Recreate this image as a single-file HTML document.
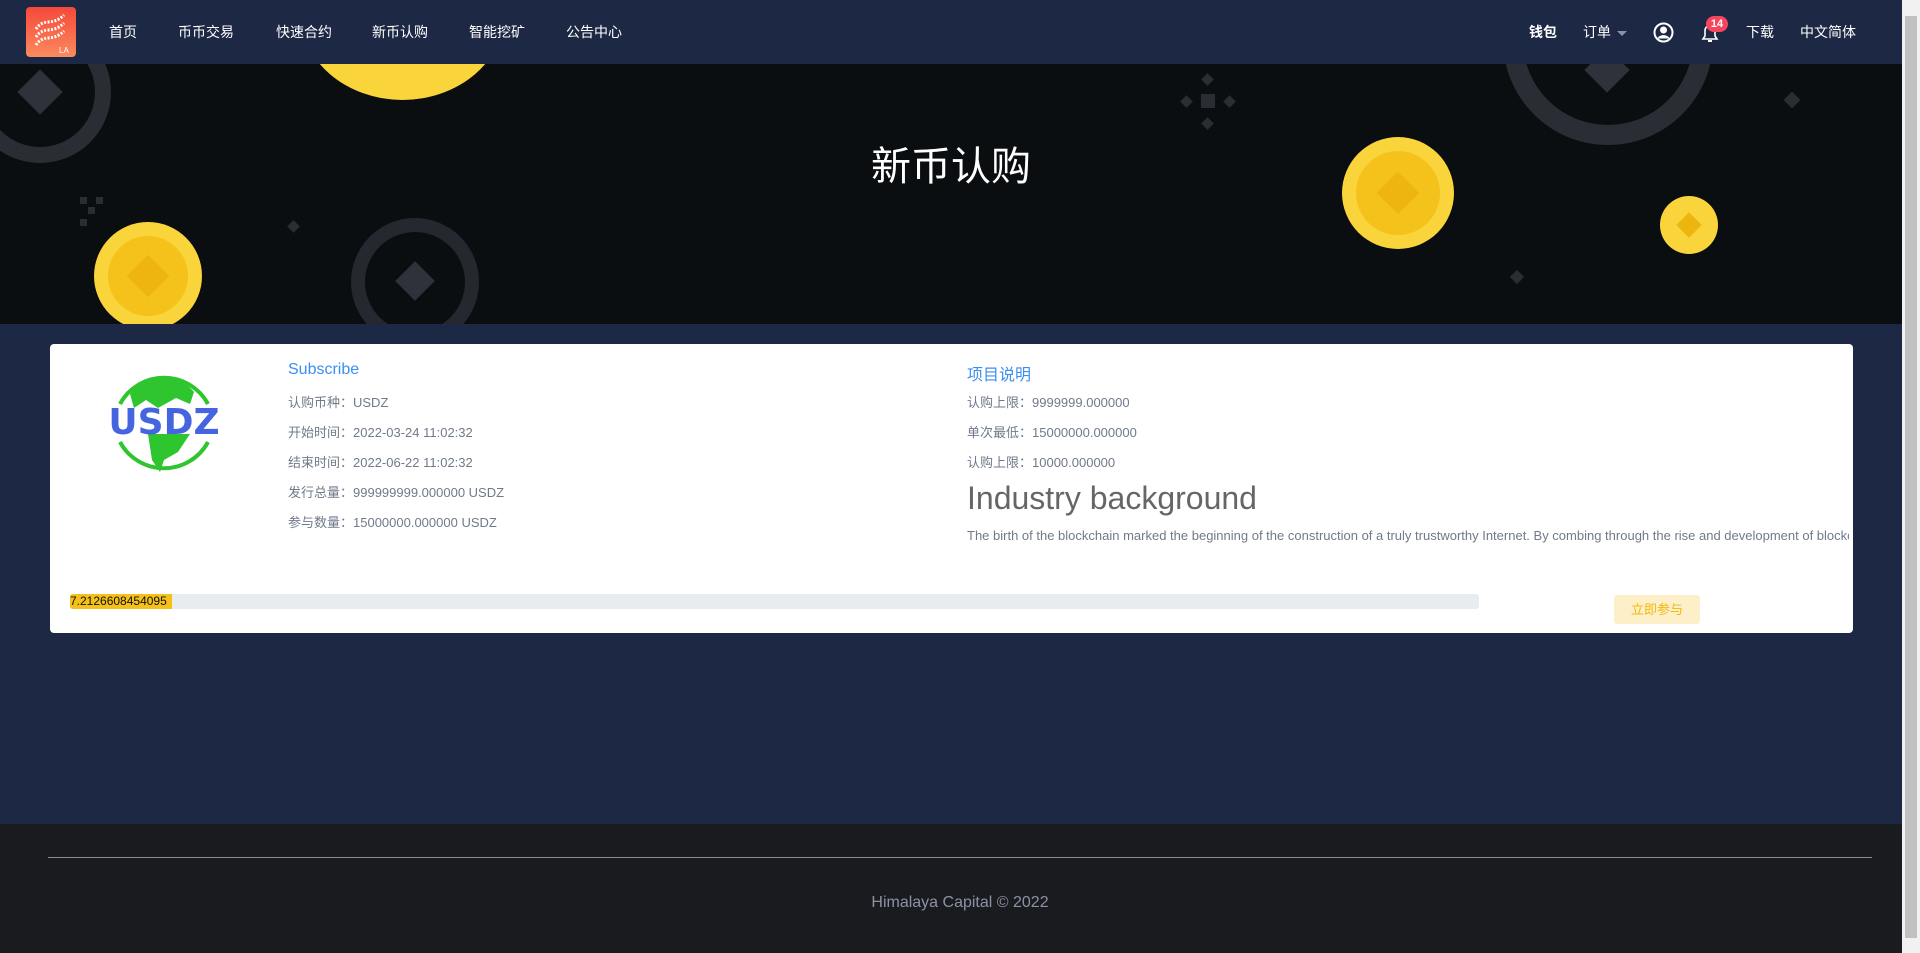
<!DOCTYPE html>
<html><head><meta charset="utf-8"><style>
*{margin:0;padding:0;box-sizing:border-box}
body{width:1920px;height:953px;overflow:hidden;background:#1c2844;font-family:"Liberation Sans","Noto Sans CJK SC",sans-serif;position:relative}
.nav{position:absolute;left:0;top:0;width:1902px;height:64px;background:#1c2844}
.nav a{position:absolute;top:22px;color:#fff;font-size:14px;text-decoration:none;white-space:nowrap}
.logo{position:absolute;left:26px;top:7px;width:50px;height:50px;border-radius:4px;background:linear-gradient(#f5493a,#fb8a5e)}
.banner{position:absolute;left:0;top:64px;width:1902px;height:260px;background:#0b0e11;overflow:hidden}
.c{position:absolute;border-radius:50%}
.title{position:absolute;left:0;width:1902px;top:70px;text-align:center;color:#fff;font-size:40px}
.card{position:absolute;left:50px;top:344px;width:1803px;height:289px;background:#fff;border-radius:4px;overflow:hidden}
.t{position:absolute;font-size:13px;color:#707a8a;white-space:nowrap}
.h{position:absolute;font-size:16px;color:#3b8ff0}
.footer{position:absolute;left:0;top:824px;width:1902px;height:129px;background:#1a1b1f}
.sb{position:absolute;left:1902px;top:0;width:18px;height:953px;background:#f1f1f1}
.d{position:absolute;background:#2a2d34;transform:rotate(45deg)}
</style></head><body>
<div class="nav">
<div class="logo"><svg width="50" height="50" viewBox="0 0 50 50"><g fill="none" stroke="#fff" stroke-width="3" stroke-dasharray="2 1.5"><path d="M10 22 C18 10 26 20 38 8"/><path d="M10 30 C18 18 26 28 38 16"/><path d="M10 38 C18 26 26 36 38 24"/></g><text x="33" y="46" font-size="8" fill="#fff" font-family="Liberation Sans">LA</text></svg></div>
<a style="left:109px">首页</a><a style="left:178px">币币交易</a><a style="left:276px">快速合约</a><a style="left:372px">新币认购</a><a style="left:469px">智能挖矿</a><a style="left:566px">公告中心</a>
<a style="left:1529px;font-weight:bold">钱包</a><a style="left:1583px">订单</a>
<div style="position:absolute;left:1617px;top:31px;border:5px solid transparent;border-top:5px solid #8a93a5"></div>
<svg style="position:absolute;left:1653px;top:22px" width="21" height="21" viewBox="0 0 21 21"><circle cx="10.5" cy="10.5" r="9" fill="none" stroke="#fff" stroke-width="2"/><circle cx="10.5" cy="8" r="3.5" fill="#fff"/><path d="M4.5 16.5 C6 12 15 12 16.5 16.5" fill="#fff"/></svg>
<svg style="position:absolute;left:1700px;top:22px" width="20" height="22" viewBox="0 0 20 22"><path d="M3 17 L5 14 V9 C5 5 7.5 4 10 4 C12.5 4 15 5 15 9 V14 L17 17 Z" fill="none" stroke="#fff" stroke-width="1.6"/><rect x="8" y="18" width="4" height="2" fill="#fff"/></svg>
<div style="position:absolute;left:1706px;top:16px;width:22px;height:16px;border-radius:8px;background:#f6465d;color:#fff;font-size:11px;font-weight:bold;text-align:center;line-height:16px">14</div>
<a style="left:1746px">下载</a><a style="left:1800px">中文简体</a>
</div>
<div class="banner">
<div class="c" style="left:300px;top:-140px;width:205px;height:176px;background:#f9d53b;border-radius:0 0 50% 50%"></div>
<div class="c" style="left:-31px;top:-43px;width:142px;height:142px;border:16px solid #2a2d34"></div>
<div style="position:absolute;left:24px;top:12px;width:32px;height:32px;background:#2f323a;transform:rotate(45deg)"></div>
<div class="c" style="left:351px;top:154px;width:128px;height:128px;border:14px solid #25282f"></div>
<div style="position:absolute;left:401px;top:203px;width:28px;height:28px;background:#2f323a;transform:rotate(45deg)"></div>
<div class="c" style="left:1503px;top:-129px;width:210px;height:210px;border:20px solid #2a2d34"></div>
<div style="position:absolute;left:1591px;top:-10px;width:32px;height:32px;background:#2f323a;transform:rotate(45deg)"></div>
<div class="c" style="left:1342px;top:73px;width:112px;height:112px;background:#f9d53b"></div>
<div class="c" style="left:1356px;top:87px;width:84px;height:84px;background:#f4c21a"></div>
<div style="position:absolute;left:1383px;top:114px;width:30px;height:30px;background:#eeb510;transform:rotate(45deg)"></div>
<div class="c" style="left:1660px;top:132px;width:58px;height:58px;background:#f9d53b"></div>
<div style="position:absolute;left:1680px;top:152px;width:18px;height:18px;background:#eeb510;transform:rotate(45deg)"></div>
<div class="c" style="left:94px;top:158px;width:108px;height:108px;background:#f9d53b"></div>
<div class="c" style="left:108px;top:172px;width:80px;height:80px;background:#f4c21a"></div>
<div style="position:absolute;left:133px;top:197px;width:30px;height:30px;background:#eeb510;transform:rotate(45deg)"></div>
<div style="position:absolute;left:1201px;top:30px;width:14px;height:14px;background:#2a2d34"></div>
<div class="d" style="left:1182px;top:33px;width:9px;height:9px"></div>
<div class="d" style="left:1225px;top:33px;width:9px;height:9px"></div>
<div class="d" style="left:1203px;top:11px;width:9px;height:9px"></div>
<div class="d" style="left:1203px;top:55px;width:9px;height:9px"></div>
<div style="position:absolute;left:80px;top:133px;width:7px;height:7px;background:#2a2d34"></div>
<div style="position:absolute;left:96px;top:133px;width:7px;height:7px;background:#2a2d34"></div>
<div style="position:absolute;left:88px;top:143px;width:7px;height:7px;background:#2a2d34"></div>
<div style="position:absolute;left:80px;top:155px;width:7px;height:7px;background:#2a2d34"></div>
<div class="d" style="left:1786px;top:30px;width:12px;height:12px"></div>
<div class="d" style="left:1512px;top:208px;width:10px;height:10px"></div>
<div class="d" style="left:289px;top:158px;width:9px;height:9px"></div>
<div class="title">新币认购</div>
</div>
<div class="card">
<svg style="position:absolute;left:56px;top:20px" width="116" height="116" viewBox="0 0 116 116"><path d="M14 40 A50 50 0 0 1 102 40" fill="none" stroke="#2ec52e" stroke-width="4"/><path d="M24 30 C40 10 72 8 88 28 L84 40 L70 34 L52 44 L40 36 L28 44 Z" fill="#2ec52e"/><path d="M14 78 A50 50 0 0 0 102 78" fill="none" stroke="#2ec52e" stroke-width="4"/><path d="M42 70 L84 70 L72 88 L58 96 L54 108 L46 96 Z" fill="#2ec52e"/><text x="58" y="70" text-anchor="middle" font-size="36" font-weight="bold" fill="#4565e0" font-family="DejaVu Sans">USDZ</text></svg>
<div class="h" style="left:238px;top:17px">Subscribe</div>
<div class="t" style="left:238px;top:48px">认购币种：USDZ</div>
<div class="t" style="left:238px;top:78px">开始时间：2022-03-24 11:02:32</div>
<div class="t" style="left:238px;top:108px">结束时间：2022-06-22 11:02:32</div>
<div class="t" style="left:238px;top:138px">发行总量：999999999.000000 USDZ</div>
<div class="t" style="left:238px;top:168px">参与数量：15000000.000000 USDZ</div>
<div class="h" style="left:917px;top:17px">项目说明</div>
<div class="t" style="left:917px;top:48px">认购上限：9999999.000000</div>
<div class="t" style="left:917px;top:78px">单次最低：15000000.000000</div>
<div class="t" style="left:917px;top:108px">认购上限：10000.000000</div>
<div class="t" style="left:917px;top:136px;font-size:32px;color:#666">Industry background</div>
<div class="t" style="left:917px;top:184px;font-size:13px;width:882px;overflow:hidden">The birth of the blockchain marked the beginning of the construction of a truly trustworthy Internet. By combing through the rise and development of blockchain technology and its applications</div>
<div style="position:absolute;left:20px;top:250px;width:1409px;height:15px;background:#e9ecef;border-radius:3px"></div>
<div style="position:absolute;left:20px;top:250px;width:102px;height:15px;background:#f5c118;border-radius:3px 0 0 3px;font-size:12px;line-height:15px;color:#111">7.2126608454095</div>
<div style="position:absolute;left:1564px;top:251px;width:86px;height:29px;background:#fdf0c9;border-radius:3px;color:#f0b90b;font-size:13px;text-align:center;line-height:29px">立即参与</div>
</div>
<div class="footer">
<div style="position:absolute;left:48px;top:33px;width:1824px;height:1px;background:#8a8d96"></div>
<div style="position:absolute;left:0;width:1920px;top:70px;text-align:center;color:#8a93a5;font-size:16px">Himalaya Capital © 2022</div>
</div>
<div class="sb"><div style="position:absolute;left:3px;top:16px;width:12px;height:922px;background:#c1c1c1"></div></div>
</body></html>
